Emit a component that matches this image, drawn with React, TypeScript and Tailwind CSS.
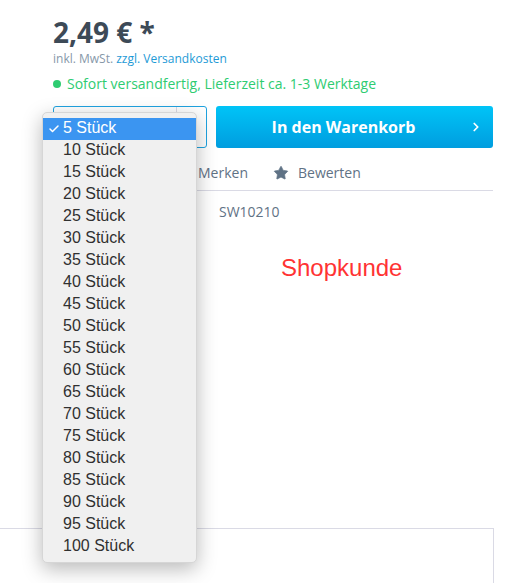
import { Heart, Star, ChevronRight, ChevronDown, Check } from "lucide-react";

const quantities = [5, 10, 15, 20, 25, 30, 35, 40, 45, 50, 55, 60, 65, 70, 75, 80, 85, 90, 95, 100];

export default function App() {
  return (
    <div className="relative w-[515px] h-[583px] overflow-hidden bg-white font-['Open_Sans',sans-serif]">
      <div className="pl-[53px] pr-[22px] pt-[14px]">
        {/* Price */}
        <div className="text-[28px] leading-[36px] font-bold text-[#3d4a57]">2,49 € *</div>
        <div className="mt-[1px] text-[12px] leading-[16px] text-[#8798a9]">
          inkl. MwSt. <a className="text-[#1e9ad6]">zzgl. Versandkosten</a>
        </div>

        {/* Delivery */}
        <div className="mt-[7px] flex items-center gap-[6px] text-[14px] leading-[20px] text-[#2ecc71]">
          <span className="inline-block w-[8px] h-[8px] rounded-full bg-[#2ecc71]" />
          <span>Sofort versandfertig, Lieferzeit ca. 1-3 Werktage</span>
        </div>

        {/* Buy box (select is covered by the open menu) */}
        <div className="mt-[12px] flex gap-[9px] h-[42px]">
          <div className="w-[154px] flex border border-[#1fa3e0] rounded-[3px] text-[#5f7285]">
            <div className="flex-1" />
            <div className="w-[30px] border-l border-[#dadae5] flex items-center justify-center">
              <ChevronDown size={14} />
            </div>
          </div>
          <button className="flex-1 relative flex items-center justify-center pr-[22px] rounded-[3px] bg-gradient-to-b from-[#00c4f7] to-[#009ddf] text-white font-bold text-[16px]">
            In den Warenkorb
            <ChevronRight size={14} strokeWidth={3} className="absolute right-[10px]" />
          </button>
        </div>

        {/* Actions */}
        <div className="mt-[15px] pb-[7px] border-b border-[#dadae5] flex items-center text-[14px] leading-[20px] text-[#5f7285]">
          <span className="w-[125px]" />
          <Heart size={14} className="mr-[6px]" />
          <span className="mr-[25px]">Merken</span>
          <Star size={16} fill="#5f7285" strokeWidth={1} className="mr-[9px]" />
          <span>Bewerten</span>
        </div>

        <div className="mt-[11px] pl-[166px] text-[14px] leading-[20px] text-[#5f7285]">SW10210</div>

        <div className="mt-[32px] pl-[228px] text-[24px] leading-[28px] text-[#ff3333] font-['Liberation_Sans',Arial,sans-serif]">
          Shopkunde
        </div>
      </div>

      {/* Lower panel */}
      <div className="absolute left-0 top-[528px] w-[494px] h-[60px] border-t border-r border-[#dadae5]" />

      {/* Native dropdown menu */}
      <div className="absolute left-[42px] top-[112px] w-[155px] pt-[5px] pb-[4px] rounded-[5px] bg-[#f0f0f0] border border-[#d6d6d6] shadow-[0_6px_20px_rgba(0,0,0,0.28)] font-['Liberation_Sans',Arial,sans-serif] text-[16px] text-[#303030]">
        {quantities.map((q, i) => (
          <div
            key={q}
            className={
              i === 0
                ? "relative h-[22px] leading-[19px] pl-[20px] bg-[#3b95f1] text-white"
                : "relative h-[22px] leading-[19px] pl-[20px]"
            }
          >
            {i === 0 && <Check size={12} strokeWidth={3} className="absolute left-[5px] top-[5px]" />}
            {q} Stück
          </div>
        ))}
      </div>
    </div>
  );
}
